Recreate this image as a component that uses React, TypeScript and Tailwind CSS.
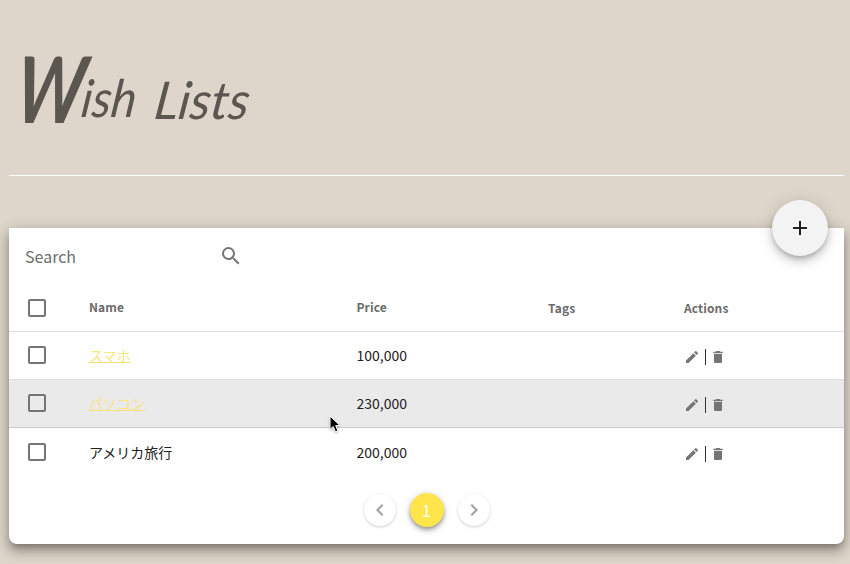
import React from 'react';
import { MdSearch, MdAdd, MdEdit, MdDelete, MdCheckBoxOutlineBlank, MdChevronLeft, MdChevronRight } from 'react-icons/md';

const columns = 'grid grid-cols-[80px_267.5px_191.5px_136px_1fr]';

function Checkbox() {
  return <MdCheckBoxOutlineBlank className="ml-4 size-6 text-[#757575]" />;
}

function Row({ name, price, link = false, className = '' }: { name: string; price: string; link?: boolean; className?: string }) {
  return (
    <div className={`${columns} h-12 items-center text-sm text-[#212121] ${className}`}>
      <span className="pb-0.5"><Checkbox /></span>
      <span className={link ? 'pb-0.5 text-[#fbe47c] underline decoration-[#f8e070]' : 'pb-0.5'}>{name}</span>
      <span className="pb-0.5">{price}</span>
      <span />
      <span className="flex items-center pt-[3px] text-base">
        <MdEdit className="size-4 text-[#757575]" />
        <span className="ml-[5px] h-4 w-px bg-[#333]" />
        <MdDelete className="ml-1 size-4 text-[#757575]" />
      </span>
    </div>
  );
}

export default function App() {
  return (
    <main className="relative h-[564px] w-[850px] overflow-hidden bg-[#ded6ca] pl-[9px] pr-1.5 font-['Noto_Sans_CJK_JP',sans-serif]">
      <h1 className="flex h-[176px] items-start border-b border-white pl-1 font-['Lato',sans-serif] font-normal italic leading-none text-[#5b564f]">
        <span className="mt-[42px] block w-[67px] origin-[0_85%] -skew-x-[9deg] scale-x-[.77] text-[92px] font-bold">W</span>
        <span className="mt-[71px] block w-[73px] origin-[0_85%] -skew-x-[8deg] scale-x-[.91] text-[52px]">ish</span>
        <span className="mt-[73px] block origin-[0_85%] -skew-x-[8deg] scale-x-[.98] text-[52px]">Lists</span>
      </h1>
      <section className="relative mt-[52px] h-[316px] rounded-b-lg bg-white shadow-[0_5px_6px_-3px_rgba(0,0,0,.25),0_8px_12px_1px_rgba(0,0,0,.18),0_3px_14px_2px_rgba(0,0,0,.16)]">
        <button className="absolute -top-7 right-4 flex size-14 items-center justify-center rounded-full bg-[#f3f3f3] text-[#212121] shadow-[0_3px_5px_-1px_rgba(0,0,0,.2),0_6px_10px_rgba(0,0,0,.14),0_1px_18px_rgba(0,0,0,.12)]">
          <MdAdd className="size-6" />
        </button>
        <div className="flex h-14 items-center pl-4 text-base text-[#6d6d6d]">
          <span className="w-[194px]">Search</span>
          <MdSearch className="size-6 text-[#757575]" />
        </div>
        <div className={`${columns} h-12 items-center border-b border-[#dedede] text-xs font-bold tracking-[.1px] text-[#6b6b6b]`}>
          <Checkbox />
          <span className="pb-0.5">Name</span>
          <span className="pb-0.5">Price</span>
          <span>Tags</span>
          <span>Actions</span>
        </div>
        <Row name="スマホ" price="100,000" link className="border-b border-[#dedede]" />
        <Row name="パソコン" price="230,000" link className="border-b border-[#cacaca] bg-[#eaeaea]" />
        <Row name="アメリカ旅行" price="200,000" className="pt-px" />
        <nav className="flex items-center justify-center gap-[14px] pt-4">
          <button className="flex size-8 items-center justify-center rounded-full bg-white text-[#a0a0a0] shadow-[0_1px_3px_rgba(0,0,0,.2)]"><MdChevronLeft className="size-6" /></button>
          <button className="mt-px flex size-[34px] items-center justify-center rounded-full bg-[#ffe54c] text-base text-white shadow-[0_2px_4px_-1px_rgba(0,0,0,.3),0_4px_5px_rgba(0,0,0,.18),0_1px_10px_rgba(0,0,0,.12)]">1</button>
          <button className="flex size-8 items-center justify-center rounded-full bg-white text-[#a0a0a0] shadow-[0_1px_3px_rgba(0,0,0,.2)]"><MdChevronRight className="size-6" /></button>
        </nav>
      </section>
      <svg className="absolute left-[329px] top-[415px] drop-shadow-[0_1px_1px_rgba(0,0,0,.3)]" width="12" height="18" viewBox="0 0 12 18">
        <path d="M1 1v13.5l3.2-3 2.2 5.3 2.5-1-2.2-5.2H11L1 1Z" fill="#000" stroke="#fff" />
      </svg>
    </main>
  );
}
